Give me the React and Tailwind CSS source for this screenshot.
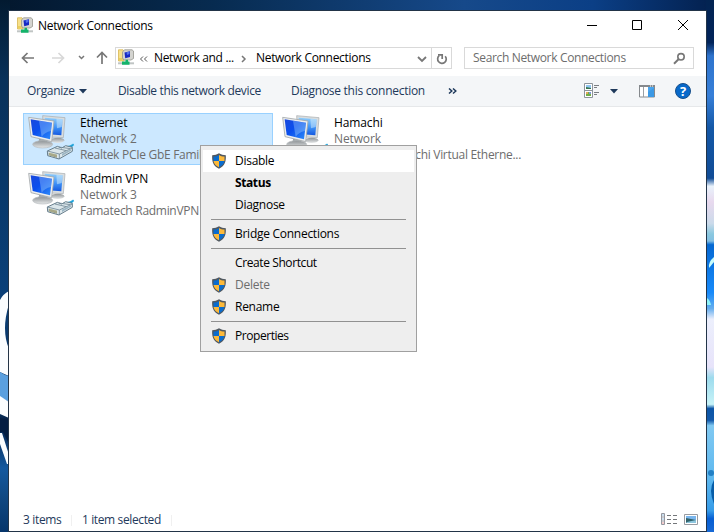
import React from "react";

function Shield() {
  return (
    <svg width="16" height="16" viewBox="0 0 16 16">
      <path d="M8 .3C6.200 1.600 3.500 2.300 1.200 2.300C.8 8 1.800 12.800 8 15.700C14.200 12.800 15.200 8 14.800 2.300C12.500 2.300 9.800 1.600 8 .3Z" fill="#505860" />
      <path d="M8 1.900C6.500 2.900 4.500 3.500 2.500 3.600V8H8Z" fill="#0a6cce" />
      <path d="M8 1.900C9.500 2.900 11.500 3.500 13.500 3.600V8H8Z" fill="#fcb93a" />
      <path d="M2.500 8H8V14.200C4.500 12.600 2.900 10.500 2.500 8Z" fill="#fcb93a" />
      <path d="M13.500 8H8V14.200C11.500 12.600 13.100 10.500 13.500 8Z" fill="#0a6cce" />
    </svg>
  );
}

function NetworkIcon() {
  return (
    <svg className="shrink-0" width="16" height="16" viewBox="0 0 16 16">
      <path d="M0.500 .8H5L6 2V12H0.500Z" fill="#f7e08a" stroke="#d8b650" strokeWidth=".8" />
      <path d="M1 9H5V11.500H1Z" fill="#ead060" />
      <path d="M6.500 .8H14L15.500 2V9.500L13 11H6L4.500 9V3Z" fill="#d4d4d0" stroke="#96968e" strokeWidth=".8" />
      <path d="M6.500 3.500L12 2.200V8L7.200 9.300Z" fill="#1629c4" />
      <path d="M8.500 3.200L11.500 2.500V5L9 6Z" fill="#5271ec" />
      <path d="M0 13.300H16V15.300H0Z" fill="#c0c5c4" />
      <path d="M7.500 10.800H10V12.500H11.500V15.700H4V12.500H7.500Z" fill="#13b36a" />
    </svg>
  );
}

function ConnectionIcon() {
  return (
    <svg className="shrink-0" width="48" height="48" viewBox="0 0 144 144">
      <defs>
        <linearGradient id="screen" x1="0" y1="0" x2="1" y2="1">
          <stop offset="0" stopColor="#1a48dc" />
          <stop offset=".45" stopColor="#0a4fee" />
          <stop offset="1" stopColor="#2f8dfa" />
        </linearGradient>
        <linearGradient id="screenBack" x1="0" y1="0" x2="0" y2="1">
          <stop offset="0" stopColor="#8fcdfb" />
          <stop offset=".55" stopColor="#3f92f6" />
          <stop offset="1" stopColor="#1458e0" />
        </linearGradient>
        <linearGradient id="stand" x1="0" y1="0" x2="0" y2="1">
          <stop offset="0" stopColor="#8d9295" />
          <stop offset="1" stopColor="#e6e8e9" />
        </linearGradient>
      </defs>
      <ellipse cx="92" cy="76" rx="20" ry="8" fill="url(#stand)" />
      <path d="M47 2L114 8L109 68L70 66L50 58Z" fill="#d9dddf" stroke="#a6abae" strokeWidth="2" />
      <path d="M53 8L107 13L103 61L54 57Z" fill="url(#screenBack)" />
      <path d="M88 11L107 13L104 36L90 40Z" fill="#d5eefc" opacity=".5" />
      <path d="M37 68L62 74L60 86L34 84Z" fill="#9da3a6" />
      <ellipse cx="47" cy="88" rx="30" ry="11" fill="url(#stand)" stroke="#b5babd" strokeWidth="2" />
      <path d="M5 7L81 18L74 80L12 65Z" fill="#eceeef" stroke="#a3a8ab" strokeWidth="2.500" />
      <path d="M11 13L75 23L69 73L17 60Z" fill="url(#screen)" />
      <path d="M36 17L75 23L72 48Q52 52 44 66Z" fill="#9fd0fd" opacity=".4" />
      <path d="M112 99L130 94L140 88" fill="none" stroke="#3fb2e0" strokeWidth="6" />
      <path d="M121 97L141 87L133 100Z" fill="#1c9fd8" />
      <path d="M61 108L91 94L104 99L116 92L136 97V109L96 132L62 122Z" fill="#dbe6ea" stroke="#667d8b" strokeWidth="3" />
      <path d="M61 108L97 117L136 99M97 117V132M84 99L118 107M96 96L130 101" fill="none" stroke="#708795" strokeWidth="2.500" />
      <path d="M65 113L90 119V128L65 121Z" fill="#7e8c93" />
      <path d="M69 113V122M75 115V124M81 116V125M87 118V127" stroke="#e1cf77" strokeWidth="2.500" />
      <path d="M105 116L132 103V107L105 123Z" fill="#9bb5c4" />
    </svg>
  );
}

function Wallpaper() {
  return (
    <svg className="absolute left-0 top-0" width="714" height="532" viewBox="0 0 714 532">
      <defs>
        <linearGradient id="top" x1="0" x2="1">
          <stop offset="0" stopColor="#03172d" />
          <stop offset=".3" stopColor="#072b50" />
          <stop offset=".65" stopColor="#16498a" />
          <stop offset=".83" stopColor="#0b3f86" />
          <stop offset="1" stopColor="#03204e" />
        </linearGradient>
        <linearGradient id="left" x1="0" y1="0" x2="0" y2="1">
          <stop offset="0" stopColor="#021a30" />
          <stop offset=".15" stopColor="#08315a" />
          <stop offset=".55" stopColor="#0a4079" />
          <stop offset=".78" stopColor="#062c57" />
          <stop offset=".79" stopColor="#041f45" />
          <stop offset=".88" stopColor="#14599f" />
          <stop offset=".94" stopColor="#104780" />
          <stop offset="1" stopColor="#06356a" />
        </linearGradient>
        <linearGradient id="right" gradientUnits="userSpaceOnUse" x1="0" y1="0" x2="0" y2="532">
          <stop offset="0" stopColor="#032452" />
          <stop offset=".08" stopColor="#02245a" />
          <stop offset=".105" stopColor="#2f74cd" />
          <stop offset=".18" stopColor="#377fd8" />
          <stop offset=".24" stopColor="#1458a7" />
          <stop offset=".335" stopColor="#114c96" />
          <stop offset=".35" stopColor="#e9f2fb" />
          <stop offset=".38" stopColor="#e8d9ee" />
          <stop offset=".42" stopColor="#cbdaea" />
          <stop offset=".44" stopColor="#8ac8df" />
          <stop offset=".453" stopColor="#83bfe3" />
          <stop offset=".46" stopColor="#0568d2" />
          <stop offset=".55" stopColor="#188afa" />
          <stop offset=".58" stopColor="#66aeee" />
          <stop offset=".6" stopColor="#eceffc" />
          <stop offset=".69" stopColor="#e7e3fa" />
          <stop offset=".71" stopColor="#9ddbed" />
          <stop offset=".76" stopColor="#c7f3f8" />
          <stop offset=".768" stopColor="#0c55a7" />
          <stop offset=".79" stopColor="#1259aa" />
          <stop offset=".8" stopColor="#81c9f2" />
          <stop offset=".9" stopColor="#5db8ef" />
          <stop offset=".96" stopColor="#369be8" />
          <stop offset=".975" stopColor="#075ed3" />
          <stop offset="1" stopColor="#1769d5" />
        </linearGradient>
      </defs>
      <path d="M0 0H714V12H0Z" fill="url(#top)" />
      <path d="M0 0H10V532H0Z" fill="url(#left)" />
      <path d="M706 0H714V532H706Z" fill="url(#right)" />
      <path d="M9 291Q3 294 0 300V372Q4 374 9 376V349Q1 330 9 304Z" fill="#fafdff" />
      <path d="M0 372Q4 375 9 376V402L0 397Z" fill="#5ba0df" />
      <path d="M0 396L9 402V418L0 414Z" fill="#fafdff" />
      <path d="M0 418L9 420V444L3 432H0Z" fill="#041e43" />
      <path d="M0 433H2L9 455V464H7L0 444Z" fill="#fafdff" />
      <path d="M714 257Q708 262 709 268L714 262Z" fill="#c6fbfb" />
      <path d="M707 298Q710 300 711 305H707Z" fill="#8ef4fa" />
      <circle cx="711" cy="473" r="3" fill="#2280c5" />
      <path d="M714 480Q708 490 714 504Z" fill="#075da8" />
    </svg>
  );
}

function ConnectionItem({ name, network, device, selected }) {
  return (
    <div
      className={
        "flex h-[52px] w-[250px] border pl-[3px] pt-px " +
        (selected ? "border-[#99d1ff] bg-[#cce8ff]" : "border-transparent")
      }
    >
      <ConnectionIcon />
      <div className="ml-[5px] whitespace-nowrap leading-4 tracking-[-0.12px] text-[#6d6d6d]">
        <div className="text-black">{name}</div>
        <div>{network}</div>
        <div className="tracking-[-0.29px]">{device}</div>
      </div>
    </div>
  );
}

function MenuItem({ label, shield, className = "" }) {
  return (
    <div className={"mx-[2px] flex h-[22px] items-center pl-[8px] " + className}>
      <div className="w-[24px]">{shield && <Shield />}</div>
      <span>{label}</span>
    </div>
  );
}

function MenuSeparator() {
  return <div className="ml-[10px] mr-[10px] h-[7px] pt-[3px]"><div className="h-px bg-[#919191]" /></div>;
}

function ContextMenu() {
  return (
    <div className="absolute left-[200px] top-[145px] h-[207px] w-[217px] border border-[#a0a0a0] bg-[#eeeeee] py-[4px] tracking-[-0.27px] text-black">
      <MenuItem label="Disable" shield className="bg-white" />
      <MenuItem label="Status" className="font-bold tracking-[-0.4px]" />
      <MenuItem label="Diagnose" />
      <MenuSeparator />
      <MenuItem label="Bridge Connections" shield />
      <MenuSeparator />
      <MenuItem label="Create Shortcut" className="tracking-[-0.4px]" />
      <MenuItem label="Delete" shield className="text-[#6d6d6d]" />
      <MenuItem label="Rename" shield />
      <MenuSeparator />
      <MenuItem label="Properties" shield className="tracking-[-0.45px]" />
    </div>
  );
}

function TitleBar() {
  return (
    <div className="flex h-[36px] items-start pl-[8px] text-black">
      <div className="mt-[6px]"><NetworkIcon /></div>
      <span className="ml-[5px] mt-[7px] leading-4 tracking-[-0.31px]">Network Connections</span>
      <svg className="ml-auto mr-[15px] mt-[8px]" width="104" height="12" viewBox="0 0 104 12" fill="none" stroke="#000">
        <path d="M0 6.500H10M45.500 1.500H54.500V10.500H45.500Z" />
        <path d="M91 1L101 11M101 1L91 11" />
      </svg>
    </div>
  );
}

function NavBar() {
  return (
    <div className="flex h-[29px] items-start">
      <svg className="shrink-0" width="106" height="22" viewBox="0 0 106 22" fill="none">
        <path d="M25 11H13.500M18.500 6L13.500 11L18.500 16" stroke="#777" strokeWidth="1.700" />
        <path d="M43 11H54.500M49.500 6L54.500 11L49.500 16" stroke="#d8d8d8" strokeWidth="1.700" />
        <path d="M70 9L72.500 11.500L75 9" stroke="#777" strokeWidth="1.500" />
        <path d="M93 17V5.500M88 10.500L93 5.500L98 10.500" stroke="#777" strokeWidth="1.700" />
      </svg>
      <div className="flex h-[22px] w-[337px] items-center border border-[#d9d9d9] text-black">
        <div className="-mt-[2px] ml-[2px]"><NetworkIcon /></div>
        <svg className="ml-[5px] mt-[2px] shrink-0" width="9" height="8" viewBox="0 0 9 8" fill="none" stroke="#555">
          <path d="M4 1.500L1.500 4L4 6.500M8 1.500L5.500 4L8 6.500" />
        </svg>
        <span className="ml-[6px] w-[82px] whitespace-nowrap tracking-[-0.33px]">Network and ...</span>
        <svg className="ml-[5px] mt-[2px] shrink-0" width="6" height="8" viewBox="0 0 6 8" fill="none" stroke="#777" strokeWidth="1.500">
          <path d="M1 1L4 4L1 7" />
        </svg>
        <span className="ml-[9px] whitespace-nowrap tracking-[-0.31px]">Network Connections</span>
        <svg className="ml-auto mr-[4px] mt-[2px] shrink-0" width="10" height="7" viewBox="0 0 10 7" fill="none" stroke="#777" strokeWidth="1.800">
          <path d="M1 1L5 5L9 1" />
        </svg>
        <div className="flex h-[20px] w-[20px] shrink-0 items-center justify-center border-l border-[#d9d9d9]">
          <svg className="shrink-0" width="12" height="13" viewBox="0 0 12 13" fill="none" stroke="#777" strokeWidth="1.700">
            <path d="M3.200 3.700A4.300 4.300 0 1 0 9.200 4.200" />
            <path d="M2 2.800H6.200V7" />
          </svg>
        </div>
      </div>
      <div className="ml-[12px] flex h-[22px] w-[230px] items-center border border-[#d9d9d9] pl-[8px] tracking-[-0.34px] text-[#6d6d6d]">
        <span>Search Network Connections</span>
        <svg className="ml-auto mr-[7px]" width="13" height="13" viewBox="0 0 13 13" fill="none" stroke="#777">
          <circle cx="8" cy="4.800" r="3.200" strokeWidth="1.600" />
          <path d="M5.500 7.300L1 11.800" strokeWidth="2" />
        </svg>
      </div>
    </div>
  );
}

function Toolbar() {
  return (
    <div className="flex h-[31px] items-center border-b border-[#e6e8ea] bg-[#f4f6f8] pl-[18px] text-[#1e395b]">
      <span className="w-[49px] tracking-[-0.3px]">Organize</span>
      <svg className="ml-[3px] shrink-0" width="8" height="5" viewBox="0 0 8 5"><path d="M0 0H8L4 4.500Z" fill="#1e395b" /></svg>
      <span className="ml-[31px] w-[144px] whitespace-nowrap tracking-[-0.36px]">Disable this network device</span>
      <span className="ml-[29px] w-[135px] whitespace-nowrap tracking-[-0.28px]">Diagnose this connection</span>
      <svg className="ml-[22px] shrink-0" width="9" height="7" viewBox="0 0 9 7" fill="none" stroke="#1e395b" strokeWidth="1.500">
        <path d="M1 .5L3.800 3L1 5.500M5 .5L7.800 3L5 5.500" />
      </svg>
      <div className="ml-auto mr-[15px] flex items-center">
        <svg width="16" height="16" viewBox="0 0 16 16">
          <path d="M.5 .5H8.500V14.500H.5ZM0 7.500H9" fill="#fff" stroke="#8d949b" />
          <path d="M2 2H7V6H2Z" fill="#91c6f1" /><path d="M2 4L7 5V6H2Z" fill="#37754c" />
          <path d="M2 9H7V13H2Z" fill="#71ae45" /><path d="M2 9H4V11H2Z" fill="#e6a55d" /><path d="M5 9H7V11H5Z" fill="#8094d4" />
          <path d="M10 2.500H15M10 4.500H13M10 9.500H15M10 11.500H13" stroke="#7b7f84" />
        </svg>
        <svg className="ml-[10px]" width="8" height="5" viewBox="0 0 8 5"><path d="M0 0H8L4 4.500Z" fill="#1e395b" /></svg>
        <svg className="ml-[21px]" width="16" height="13" viewBox="0 0 16 13">
          <path d="M.5 .5H15.500V12H.5Z" fill="#fff" stroke="#85898d" />
          <path d="M0 0H16V2H0Z" fill="#85898d" /><path d="M4.500 2V12" stroke="#9ba0a5" />
          <path d="M9 2H15V12H9Z" fill="#4aa5ee" /><path d="M9 7L15 3V12H9Z" fill="#2788d8" opacity=".4" />
          <path d="M11 1H12M13 1H14" stroke="#fff" />
        </svg>
        <div className="ml-[20px] flex h-[16px] w-[16px] items-center justify-center rounded-full border border-[#174f8b] bg-[#0869ca] text-[13px] font-bold leading-none text-white">?</div>
      </div>
    </div>
  );
}

function StatusBar() {
  return (
    <div className="flex h-[22px] items-center pl-[14px] text-[#1e395b]">
      <span className="w-[48px] tracking-[-0.35px]">3 items</span>
      <div className="h-[11px] w-px bg-[#f0f0f0]" />
      <span className="ml-[10px] w-[89px] whitespace-nowrap tracking-[-0.38px]">1 item selected</span>
      <div className="h-[11px] w-px bg-[#f0f0f0]" />
      <svg className="ml-auto mr-[8px] -mt-[3px]" width="38" height="14" viewBox="0 0 38 14" fill="none">
        <path d="M1.500 1.500H4.500V12.500H1.500ZM1 5H5M1 9H5" stroke="#9698a0" />
        <path d="M2.500 3H3.500M2.500 7H3.500" stroke="#2b79b9" /><path d="M2.500 11H3.500" stroke="#cb3232" />
        <path d="M7 3.500H11M13 3.500H17M7 7.500H11M13 7.500H17M7 11.500H11M13 11.500H17" stroke="#74777a" />
        <path d="M24.500 2.500H37.500V12.500H24.500Z" fill="#fff" stroke="#989ba1" />
        <path d="M26 4H36V11H26Z" fill="#79b6ee" /><path d="M26 6Q31 7 36 8V11H26Z" fill="#30626a" /><path d="M27 10L36 8V11H26Z" fill="#8dc6de" />
      </svg>
    </div>
  );
}

export default function App() {
  return (
    <div className="h-[532px] w-[717px] overflow-hidden bg-white font-['Open_Sans','Noto_Sans',sans-serif] text-[12px] tracking-[-0.2px]">
      <div className="relative h-[532px] w-[714px] overflow-hidden pl-[8px] pt-[10px]">
        <Wallpaper />
        <div className="relative flex h-[522px] w-[699px] flex-col border border-[#223448] bg-white">
          <TitleBar />
          <NavBar />
          <Toolbar />
          <div className="grid flex-1 grid-cols-[250px_250px] content-start gap-x-[4px] gap-y-[4px] pl-[14px] pt-[6px]">
            <ConnectionItem name="Ethernet" network="Network 2" device="Realtek PCIe GbE Family" selected />
            <ConnectionItem name="Hamachi" network="Network" device="LogMeIn Hamachi Virtual Etherne..." />
            <ConnectionItem name="Radmin VPN" network="Network 3" device="Famatech RadminVPN" />
          </div>
          <StatusBar />
        </div>
        <ContextMenu />
      </div>
    </div>
  );
}
